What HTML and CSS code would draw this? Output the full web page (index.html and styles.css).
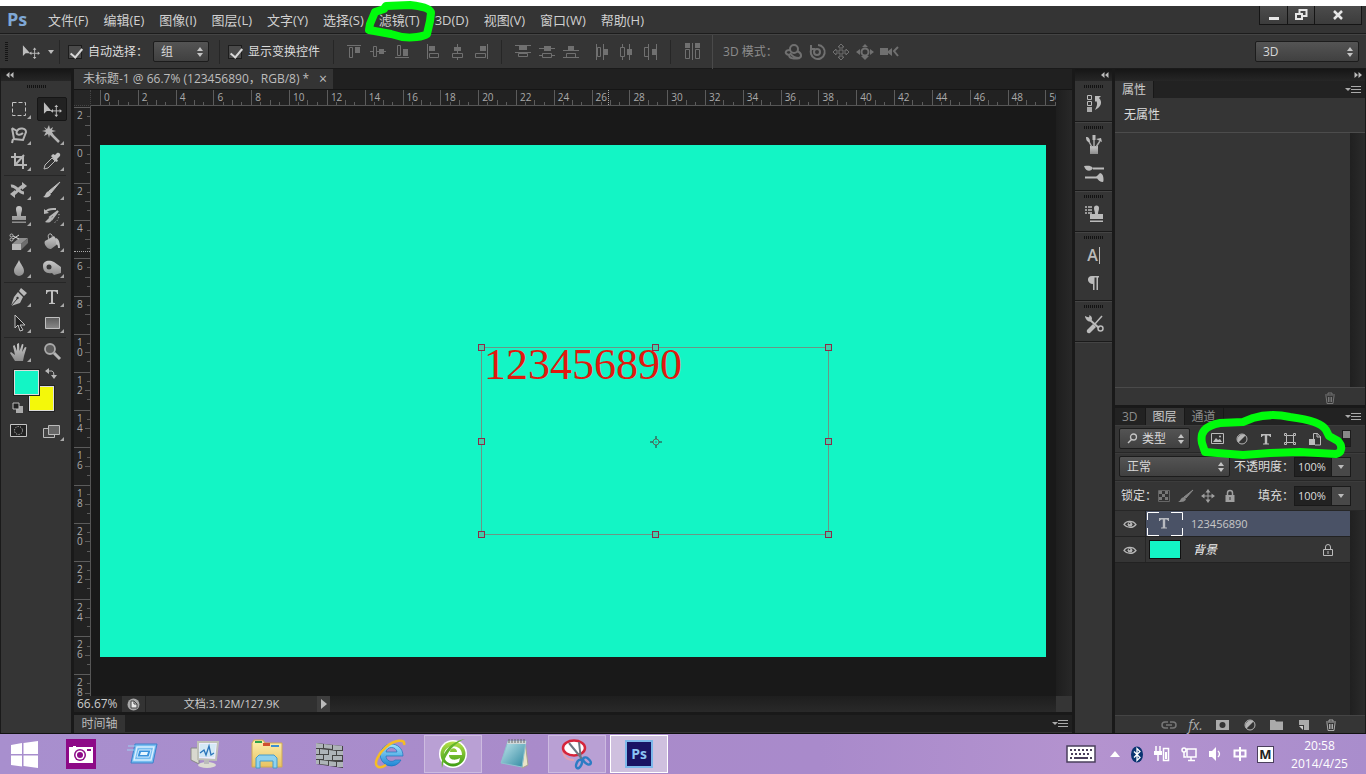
FILE: index.html
```html
<!DOCTYPE html>
<html lang="zh-CN">
<head>
<meta charset="utf-8">
<title>Ps</title>
<link rel="stylesheet" href="styles.css">
</head>
<body>
<svg class="defs" aria-hidden="true">
  <defs>
    <linearGradient id="gm" x1="0" y1="0" x2="0" y2="1"><stop offset="0" stop-color="#c8c8c8"/><stop offset="1" stop-color="#8c8c8c"/></linearGradient>
    <linearGradient id="gd" x1="0" y1="0" x2="0" y2="1"><stop offset="0" stop-color="#5c5c5c"/><stop offset="1" stop-color="#8a8a8a"/></linearGradient>
    <linearGradient id="gb" x1="0" y1="0" x2="0" y2="1"><stop offset="0" stop-color="#9fe3fb"/><stop offset="1" stop-color="#1f86d6"/></linearGradient>
    <linearGradient id="gg" x1="0" y1="0" x2="0" y2="1"><stop offset="0" stop-color="#b4e04a"/><stop offset="1" stop-color="#3d9c14"/></linearGradient>
    <linearGradient id="gt" x1="0" y1="0" x2="1" y2="1"><stop offset="0" stop-color="#c5e9ee"/><stop offset="1" stop-color="#2e87a0"/></linearGradient>
    <linearGradient id="gy" x1="0" y1="0" x2="0" y2="1"><stop offset="0" stop-color="#fdf0b0"/><stop offset="1" stop-color="#e8c260"/></linearGradient>
    <symbol id="updown" viewBox="0 0 8 12"><path d="M4 1l3 4H1zM4 11L1 7h6z" fill="#c4c4c4"/></symbol>
    <symbol id="panelmenu" viewBox="0 0 16 10"><path d="M0 3h6L3 6z" fill="#aaa"/><path d="M6 1.500h10M6 4.500h10M6 7.500h10" stroke="#aaa" fill="none"/></symbol>
    <symbol id="left2" viewBox="0 0 8 6"><path d="M3.500 0v6L0 3zM7.500 0v6L4 3z" fill="#bbb"/></symbol>
    <symbol id="right2" viewBox="0 0 8 6"><path d="M0.500 0v6L4 3zM4.500 0v6L8 3z" fill="#bbb"/></symbol>
    <symbol id="move" viewBox="0 0 20 16"><path d="M1 1v12l3-3h5z" fill="#bdbdbd"/><path d="M14 5v10M9 10h10" stroke="#bdbdbd" fill="none"/><path d="M14 3.500l2 2.500h-4zM14 16.500l2-2.500h-4zM8 10l2.500-2v4zM20 10l-2.500-2v4z" fill="#bdbdbd"/></symbol>
    <symbol id="trash" viewBox="0 0 12 12"><path d="M1 3h10M4 2.500V1h4v1.500M2 4l1 7.500h6L10 4M4.500 5v5M6 5v5M7.500 5v5" stroke="currentColor" fill="none"/></symbol>
    <symbol id="eye" viewBox="0 0 14 10"><path d="M1 5.500C3 1.500 10 1 13 5.500 10 9.500 4 9 1 5.500z" fill="none" stroke="#b5b5b5" stroke-width="1.300"/><circle cx="7" cy="5.300" r="2.400" fill="#b5b5b5"/><circle cx="6.500" cy="4.500" r=".8" fill="#333"/></symbol>
    <symbol id="lock" viewBox="0 0 12 14"><path d="M3.500 6V4a2.500 2.500 0 0 1 5 0v2" fill="none" stroke="currentColor" stroke-width="1.500"/><path d="M1.500 6h9v7h-9z" fill="currentColor"/><path d="M6 8v3" stroke="#333"/></symbol>
    <symbol id="half" viewBox="0 0 12 12"><circle cx="6" cy="6" r="5" fill="#333" stroke="#b5b5b5"/><path d="M2.500 9.500a5 5 0 0 1 7-7z" fill="#b5b5b5"/></symbol>
    <symbol id="cross" viewBox="0 0 14 14"><path d="M7 2v10M2 7h10" stroke="currentColor" fill="none"/><path d="M7 0l2.500 3.500h-5zM7 14l2.500-3.500h-5zM0 7l3.500-2.500v5zM14 7l-3.500-2.500v5z" fill="currentColor"/></symbol>
  </defs>
</svg>
<header class="menubar">
  <span class="logo">Ps</span>
  <nav class="menus">
    <button>文件(F)</button><button>编辑(E)</button><button>图像(I)</button><button>图层(L)</button><button>文字(Y)</button><button>选择(S)</button><button>滤镜(T)</button><button>3D(D)</button><button>视图(V)</button><button>窗口(W)</button><button>帮助(H)</button>
  </nav>
  <div class="winbtns">
    <button aria-label="最小化"><svg width="14" height="12" viewBox="0 0 14 12"><path d="M2 8h10v3H2z" fill="#e6e6e6"/></svg></button>
    <button aria-label="还原"><svg width="14" height="12" viewBox="0 0 14 12"><path d="M5.500 4.500v-3.500h7v6H9" fill="none" stroke="#e6e6e6" stroke-width="2"/><path d="M2 5h6v5H2z" fill="none" stroke="#e6e6e6" stroke-width="2"/></svg></button>
    <button class="close" aria-label="关闭"><svg width="14" height="12" viewBox="0 0 14 12"><path d="M3 2l8 8M11 2L3 10" stroke="#e6e6e6" stroke-width="2.500"/></svg></button>
  </div>
</header>

<section class="options">
  <span class="grip-v"></span>
  <button class="toolpreset" aria-label="移动工具"><svg width="18" height="15"><use href="#move"/></svg><span class="caret"></span></button>
  <i class="sep"></i>
  <label class="check"><input type="checkbox" checked><span>自动选择：</span></label>
  <span class="select w56"><select aria-label="自动选择"><option>组</option></select><svg width="8" height="12"><use href="#updown"/></svg></span>
  <i class="sep"></i>
  <label class="check"><input type="checkbox" checked><span>显示变换控件</span></label>
  <i class="sep"></i>
  <div class="align">
    <button aria-label="顶对齐"><svg width="16" height="16"><path d="M1 1.500h14M3.500 3.500h3v10h-3z" class="s"/><path d="M9 3h5v6H9z" class="f"/></svg></button>
    <button aria-label="垂直居中对齐"><svg width="16" height="16"><path d="M0 7.500h3M7 7.500h9M3.500 2.500h3v10h-3z" class="s"/><path d="M9 5h5v5H9z" class="f"/></svg></button>
    <button aria-label="底对齐"><svg width="16" height="16"><path d="M1 13.500h14M3.500 1.500h3v10h-3z" class="s"/><path d="M9 5h5v7H9z" class="f"/></svg></button>
  </div>
  <div class="align">
    <button aria-label="左对齐"><svg width="16" height="16"><path d="M2.500 0v15M4.500 9.500h9v4h-9z" class="s"/><path d="M4 2h6v5H4z" class="f"/></svg></button>
    <button aria-label="水平居中对齐"><svg width="16" height="16"><path d="M8.500 0v3M8.500 7v2M8.500 13v3M3.500 9.500h10v4h-10z" class="s"/><path d="M5 3h7v4H5z" class="f"/></svg></button>
    <button aria-label="右对齐"><svg width="16" height="16"><path d="M14.500 0v15M2.500 9.500h10v4h-10z" class="s"/><path d="M7 2h6v5H7z" class="f"/></svg></button>
  </div>
  <i class="sep"></i>
  <div class="align">
    <button aria-label="按顶分布"><svg width="16" height="16"><path d="M0 1.500h16M0 8.500h16M3.500 9.500h9v3h-9z" class="s"/><path d="M4 2h8v4H4z" class="f"/></svg></button>
    <button aria-label="垂直居中分布"><svg width="16" height="16"><path d="M0 4.500h16M0 11.500h4M12 11.500h4M3.500 9.500h9v4h-9z" class="s"/><path d="M5 2h7v5H5z" class="f"/></svg></button>
    <button aria-label="按底分布"><svg width="16" height="16"><path d="M0 6.500h16M0 13.500h16M3.500 9.500h9v4h-9z" class="s"/><path d="M5 2h6v4H5z" class="f"/></svg></button>
  </div>
  <div class="align">
    <button aria-label="按左分布"><svg width="16" height="16"><path d="M2.500 0v16M9.500 0v16M3.500 3.500h3v9h-3z" class="s"/><path d="M10 5h4v6h-4z" class="f"/></svg></button>
    <button aria-label="水平居中分布"><svg width="16" height="16"><path d="M4.500 0v3M4.500 13v3M11.500 0v16M2.500 3.500h4v9h-4z" class="s"/><path d="M9 5h5v6H9z" class="f"/></svg></button>
    <button aria-label="按右分布"><svg width="16" height="16"><path d="M6.500 0v16M14.500 0v16M2.500 3.500h4v9h-4z" class="s"/><path d="M10 5h4v6h-4z" class="f"/></svg></button>
  </div>
  <i class="sep"></i>
  <button class="auto" aria-label="自动对齐图层"><svg width="18" height="17"><path d="M8.500 0v17M1.500 6.500h4v9h-4zM11.500 6.500h4v9h-4z" class="s"/><path d="M1 0h5v5H1zM11 0h5v5h-5z" class="f"/></svg></button>
  <i class="sep light"></i>
  <span class="mode">3D 模式：</span>
  <div class="modes">
    <button aria-label="旋转"><svg width="18" height="16"><circle cx="10" cy="5" r="4" class="s w"/><path d="M6 6C1 6 0 10 5 11c0 4 6 4 11 3M13 7c5 2 5 6 2 7-4 0-7-2-9-5" class="s w"/></svg></button>
    <button aria-label="滚动"><svg width="18" height="16"><circle cx="9" cy="8" r="3" class="s w"/><path d="M3 1v4h4M4 4a7 7 0 1 0 6-3" class="s w"/></svg></button>
    <button aria-label="拖动"><svg width="18" height="16"><path d="M9 0l3 3h-2v4h4V5l3 3-3 3V9h-4v4h2l-3 3-3-3h2V9H4v2L1 8l3-3v2h4V3H6z" class="s"/></svg></button>
    <button aria-label="滑动"><svg width="18" height="16"><circle cx="9" cy="8" r="3.500" class="s w"/><path d="M9 0l3 3H6zM9 16l4-4H5zM0 8l4-3v6zM18 8l-4-3v6z" class="f"/></svg></button>
    <button aria-label="缩放"><svg width="18" height="16"><path d="M0 4h8v7H0zM8 7l4-3v8L8 9z" class="f"/><path d="M18 3l-4 4 4 5" class="s w"/></svg></button>
  </div>
  <span class="select work"><select aria-label="工作区"><option>3D</option></select><svg width="8" height="12"><use href="#updown"/></svg></span>
</section>

<main class="workspace">
  <aside class="tools">
    <div class="strip"><svg width="8" height="6"><use href="#left2"/></svg></div>
    <span class="grip"></span>
    <div class="toolgrid">
      <button aria-label="矩形选框" class="more"><svg width="20" height="20"><path d="M3.500 3.500h13v13h-13z" fill="none" stroke="#c4c4c4" stroke-dasharray="4 2"/></svg></button>
      <button aria-label="移动" class="on"><svg width="19" height="16"><use href="#move"/></svg></button>
      <button aria-label="套索" class="more"><svg width="20" height="20"><path d="M3 3l2 11 9 1 3-8c0-4-7-5-9-1-2 4 3 5 6 2M3 3l5 3" class="t"/><path d="M4 14l-1 4" class="t"/></svg></button>
      <button aria-label="魔棒" class="more"><svg width="20" height="20"><path d="M8 8l9 9" stroke="#b5b5b5" stroke-width="2.500"/><path d="M7 0l1 4 3-2-1 3 4 1-4 1 2 4-4-2-1 4-1-4-4 2 2-4-4-1 4-1-2-3 3 2z" fill="#b5b5b5"/></svg></button>
      <button aria-label="裁剪" class="more"><svg width="20" height="20"><path d="M6 2v12h12M2 6h12v12M7 13l8-9" class="t"/></svg></button>
      <button aria-label="吸管" class="more"><svg width="20" height="20"><path d="M11 3l2 1 2-2c2-1 4 1 3 3l-3 3 1 2-2 1-5-6z" fill="#c0c0c0"/><path d="M10 7l3 3-7 7-4 1 1-4z" class="t1"/></svg></button>
      <hr>
      <button aria-label="修补" class="more"><svg width="20" height="20"><path d="M2 6c5-1 8 7 13 7M4 14c4 0 6-8 11-8" class="t b"/><path d="M13 2l5 4-5 4zM6 10l-5 4 5 4z" fill="#b5b5b5"/></svg></button>
      <button aria-label="画笔" class="more"><svg width="20" height="20"><path d="M18 2L9 13l-2-2z" fill="#bdbdbd" stroke="#bdbdbd"/><path d="M7 11l2 3c-1 3-4 4-8 3 3-1 2-5 6-6z" fill="#bdbdbd"/></svg></button>
      <button aria-label="图章" class="more"><svg width="20" height="20"><path d="M7 3a3 3 0 0 1 6 0c0 3-1 3-1 7h5v4H3v-4h5C8 6 7 6 7 3zM3 15.500h14V17H3z" fill="url(#gm)"/></svg></button>
      <button aria-label="历史画笔" class="more"><svg width="20" height="20"><path d="M16 5l-6 8-2-2z" class="t"/><path d="M8 11l2 3c-2 3-4 3-7 2z" fill="#b5b5b5"/><path d="M3 6c4-4 7-3 11-3" class="t"/><path d="M2 3v5l5-1z" fill="#b5b5b5"/><path d="M17 8c0 5-2 8-6 9" class="t1" stroke-dasharray="1 2"/></svg></button>
      <button aria-label="橡皮擦" class="more"><svg width="20" height="20"><path d="M3 12l7-6h9l-7 6z" fill="#8f8f8f"/><path d="M3 12h9v6H3z" fill="#b8b8b8"/><path d="M12 12l7-6v5l-7 7z" fill="#6e6e6e"/><circle cx="2.500" cy="3.500" r="1.500" class="t1"/><circle cx="2.500" cy="7.500" r="1.500" class="t1"/><path d="M4 4l6 3M4 7l6-4" stroke="#ddd"/></svg></button>
      <button aria-label="油漆桶" class="more"><svg width="20" height="20"><path d="M3 9l9-5 5 7-8 6c-3 1-8-5-6-8z" fill="url(#gm)"/><path d="M8 9c-3-4-2-8 1-7 2 1 1 4 1 6" class="t1"/><path d="M14 6c3 1 4 5 4 10h-2c0-3-1-4-2-4z" fill="#bbb"/></svg></button>
      <button aria-label="模糊" class="more"><svg width="20" height="20"><path d="M10 2c2 5 5 7 5 11a5 5 0 0 1-10 0C5 9 8 7 10 2z" fill="url(#gm)"/></svg></button>
      <button aria-label="减淡" class="more"><svg width="20" height="20"><path d="M1 8C1 2 8 2 12 4l7 5v6l-7 2-2-2C4 16 1 13 1 8z" fill="url(#gm)"/><circle cx="7" cy="9" r="2.500" fill="#383838"/></svg></button>
      <hr>
      <button aria-label="钢笔" class="more"><svg width="20" height="20"><path d="M12 1l6 5-3 3-5-5zM9 5l5 5-3 6-9 3 3-9z" fill="#b8b8b8"/><path d="M2 19l6-7" stroke="#333"/><circle cx="8.500" cy="11" r="1.200" fill="#333"/></svg></button>
      <button aria-label="文字" class="more"><svg width="20" height="20"><path d="M4 3h12v4h-1c0-2-1-2.500-4-2.500V15c0 1 1 1 2 1v1H7v-1c1 0 2 0 2-1V4.500C6 4.500 5 5 5 7H4z" fill="#c0c0c0"/></svg></button>
      <button aria-label="路径选择" class="more"><svg width="20" height="20"><path d="M6 2v13l3-3 2 6 3-1-3-5h5z" fill="#222" stroke="#c0c0c0"/></svg></button>
      <button aria-label="矩形" class="more"><svg width="20" height="20"><path d="M3.500 4.500h14v11h-14z" fill="url(#gd)" stroke="#c0c0c0"/></svg></button>
      <hr>
      <button aria-label="抓手" class="more"><svg width="20" height="20"><path d="M6 19l-5-8 1-1 4 3L4 4l1.500-1L8 9 8 2l2-1 .500 8L13 2l1.500.5L13 10l3-5 1.500.5L15 14l-1 5z" fill="url(#gm)"/></svg></button>
      <button aria-label="缩放"><svg width="20" height="20"><circle cx="8" cy="7" r="5" fill="#5c5c5c" stroke="#aaa" stroke-width="1.800"/><path d="M12 11l6 6" stroke="#b5b5b5" stroke-width="3"/></svg></button>
    </div>
    <div class="colors">
      <button class="bg" aria-label="背景色"></button><button class="fg" aria-label="前景色"></button>
      <svg class="swap" width="12" height="12"><path d="M3 3h4q2 0 2 5" class="t1"/><path d="M4 0v6L0 3zM6 7h6l-3 4z" fill="#b8b8b8"/></svg>
      <svg class="reset" width="11" height="11"><path d="M4 4h7v7H4z" fill="#aaa"/><path d="M1 1h6v6H1z" fill="#222" stroke="#bbb"/></svg>
    </div>
    <div class="toolgrid">
      <button aria-label="快速蒙版"><svg width="20" height="20"><path d="M1.500 3.500h16v12h-16z" fill="#222" stroke="#c4c4c4"/><circle cx="9.500" cy="9.500" r="4" fill="none" stroke="#ddd" stroke-dasharray="1 1.500"/></svg></button>
      <button aria-label="屏幕模式" class="more"><svg width="20" height="20"><path d="M1.500 7.500h11v9h-11z" fill="#444" stroke="#bbb"/><path d="M6.500 4.500h11v9h-11z" fill="#666" stroke="#bbb"/></svg></button>
    </div>
  </aside>

  <section class="document">
    <div class="doctabs"><div class="doctab"><span>未标题-1 @ 66.7% (123456890，RGB/8) *</span><button aria-label="关闭文档">×</button></div></div>
    <div class="view">
      <div class="corner"></div>
      <div class="hruler"><div class="htrack"><span>0</span><span>2</span><span>4</span><span>6</span><span>8</span><span>10</span><span>12</span><span>14</span><span>16</span><span>18</span><span>20</span><span>22</span><span>24</span><span class="at">26</span><span>28</span><span>30</span><span>32</span><span>34</span><span>36</span><span>38</span><span>40</span><span>42</span><span>44</span><span>46</span><span>48</span><span>50</span></div></div>
      <div class="vscroll"></div>
      <div class="vruler"><div class="vtrack"><span>2</span><span>0</span><span>2</span><span class="at">4</span><span>6</span><span>8</span><span>10</span><span>12</span><span>14</span><span>16</span><span>18</span><span>20</span><span>22</span><span>24</span><span>26</span><span>28</span></div></div>
      <div class="pasteboard">
        <div class="artboard">
          <div class="box"><span class="digits">123456890</span>
            <i class="h nw"></i><i class="h n"></i><i class="h ne"></i><i class="h w"></i><i class="h e"></i><i class="h sw"></i><i class="h s"></i><i class="h se"></i>
            <svg class="pivot" width="12" height="12"><circle cx="6" cy="6" r="3" fill="none" stroke="#5d6a5b"/><path d="M6 0v3M6 9v3M0 6h3M9 6h3M5.500 6h1" stroke="#333"/></svg>
          </div>
        </div>
      </div>
    </div>
    <div class="status">
      <input class="zoom" aria-label="缩放比例" value="66.67%">
      <span class="statusicon"><svg width="13" height="13"><circle cx="6.500" cy="6.500" r="6" fill="#a8a8a8"/><path d="M4 3h3l3 3v4H4z" fill="#e8e8e8" stroke="#444"/><path d="M7 3v3h3" fill="none" stroke="#444"/></svg></span>
      <span class="docsize">文档:3.12M/127.9K</span>
      <button class="play" aria-label="状态菜单"><svg width="8" height="10"><path d="M1 0v10l6-5z" fill="#bbb"/></svg></button>
      <span class="hscroll"></span><span class="sizer"></span>
    </div>
    <div class="timeline"><button>时间轴</button><svg width="16" height="10"><use href="#panelmenu"/></svg></div>
  </section>

  <aside class="dock">
    <div class="strip end"><svg width="8" height="6"><use href="#left2"/></svg></div>
    <div class="group"><span class="grip"></span>
      <button aria-label="历史记录"><svg width="20" height="20"><path d="M3.500 1.500h4v4h-4zM3.500 7.500h4v4h-4z" fill="none" stroke="#bbb"/><path d="M3 13h5v5H3z" fill="#aaa"/><path d="M11 2h6l-2 2c4 4 2 9-4 12 2-4 3-7 1-9l-1 1z" fill="#bbb"/></svg></button></div>
    <div class="group"><span class="grip"></span>
      <button aria-label="画笔"><svg width="20" height="20"><path d="M6 11h8v8H6z" fill="url(#gm)"/><path d="M8 12L4 5M10 12V3M12 12l4-6" stroke="#aaa" stroke-width="1.500"/><path d="M2 2c3 0 4 2 4 5C3 7 2 5 2 2zM8.500 0h3v5h-3zM12 4l5-1 1 4z" fill="#bbb"/></svg></button>
      <button aria-label="画笔预设"><svg width="20" height="20"><path d="M9 5.500h11M1 14.500h12" stroke="#bbb" stroke-width="2"/><path d="M0 3c4 0 6-1 9 2-2 4-7 4-9-2zM12 14l4-4c4 0 4 9 3 9-3 0-5-2-7-5z" fill="#bbb"/></svg></button></div>
    <div class="group"><span class="grip"></span>
      <button aria-label="仿制源"><svg width="20" height="20"><path d="M10 4a2 2 0 0 1 5 0c0 3-1 3-1 6h5v5H6v-5h5c0-3-1-3-1-6zM6 16.500h13V18H6z" fill="#bbb"/><path d="M1 3h2M4 3h4M1 6h2M4 6h4M1 9h2M4 9h4" stroke="#bbb" stroke-width="1.500"/></svg></button></div>
    <div class="group"><span class="grip"></span>
      <button aria-label="字符" class="char">A<i></i></button>
      <button aria-label="段落"><svg width="20" height="20"><path d="M15 3H8C2 3 3 11 9 11v6h1.500V4.500h2V17H14V4.500h1z" fill="#bbb"/></svg></button></div>
    <div class="group"><span class="grip"></span>
      <button aria-label="工具预设"><svg width="20" height="20"><path d="M18 2l-8 9" stroke="#bbb" stroke-width="1.500"/><path d="M9 10l3 3-6 6c-2 1-4-1-3-3z" fill="#bbb"/><path d="M6 6l9 8" stroke="#bbb" stroke-width="2"/><path d="M1 2c1 0 3 2 4 1s0-2 0-2c3 1 4 4 2 6S1 5 1 2z" fill="#bbb"/><circle cx="16.500" cy="14.500" r="2.500" fill="none" stroke="#bbb" stroke-width="1.500"/></svg></button></div>
  </aside>

  <aside class="panels">
    <div class="strip end"><svg width="8" height="6"><use href="#right2"/></svg></div>
    <div class="tabs"><button class="on">属性</button><svg width="16" height="10"><use href="#panelmenu"/></svg></div>
    <div class="proptitle">无属性</div>
    <div class="propbody"><div></div><i class="track"></i></div>
    <div class="propfoot"><svg width="12" height="12"><use href="#trash"/></svg></div>
    <div class="tabs"><button>3D</button><button class="on">图层</button><button>通道</button><svg width="16" height="10"><use href="#panelmenu"/></svg></div>
    <div class="row">
      <span class="select kind"><svg class="mag" width="11" height="11"><circle cx="6.500" cy="4" r="3" fill="none" stroke="#c4c4c4" stroke-width="1.300"/><path d="M4.500 6.500L1 10" stroke="#c4c4c4" stroke-width="1.500"/></svg><select aria-label="滤镜类型"><option>类型</option></select><svg width="8" height="12"><use href="#updown"/></svg></span>
      <div class="filters">
        <button aria-label="像素图层"><svg width="14" height="14"><path d="M.5 1.500h12v10H.5z" fill="#333" stroke="#bbb"/><path d="M2 10l3-4 2 2 2-1 2 3z" fill="#bbb"/><circle cx="9" cy="4.500" r="1" fill="#bbb"/></svg></button>
        <button aria-label="调整图层"><svg width="12" height="12"><use href="#half"/></svg></button>
        <button aria-label="文字图层"><svg width="12" height="12"><path d="M1 1h10v3h-1c0-1-1-1.500-2.800-1.500V10c0 .5.800.5 1.800.5v1H3v-1c1 0 1.800 0 1.800-.5V2.500C3 2.500 2 3 2 4H1z" fill="#bbb"/></svg></button>
        <button aria-label="形状图层"><svg width="14" height="14"><path d="M3.500 3.500h7v7h-7z" fill="none" stroke="#bbb"/><path d="M1.500 1.500h2v2h-2zM10.500 1.500h2v2h-2zM1.500 10.500h2v2h-2zM10.500 10.500h2v2h-2z" fill="#333" stroke="#bbb"/></svg></button>
        <button aria-label="智能对象"><svg width="13" height="14"><path d="M5.500 7V1.500h4L12.500 5v8H7" fill="none" stroke="#bbb"/><path d="M9 1v4h4" fill="none" stroke="#bbb"/><path d="M1 7h6v6H1z" fill="#bbb"/></svg></button>
      </div>
      <button class="toggle" aria-label="打开或关闭图层过滤"></button>
    </div>
    <div class="row">
      <span class="select blend"><select aria-label="混合模式"><option>正常</option></select><svg width="8" height="12"><use href="#updown"/></svg></span>
      <label class="pct" for="op">不透明度：</label><span class="num"><input id="op" value="100%"><button aria-label="不透明度滑块"><span class="caret"></span></button></span>
    </div>
    <div class="row lockrow">
      <span class="locklabel">锁定：</span>
      <div class="locks">
        <button aria-label="锁定透明像素"><svg width="12" height="12"><path d="M.5.500h11v11H.5z" fill="#333" stroke="#666"/><path d="M1 1h3v3H1zM7 1h3v3H7zM4 4h3v3H4zM1 7h3v3H1zM7 7h3v3H7z" fill="#777"/></svg></button>
        <button aria-label="锁定图像像素"><svg width="16" height="14"><path d="M15 1L8 9 6 8z" fill="#888" stroke="#888"/><path d="M6 8l2 2c-1 3-4 3-8 3 3-1 2-4 6-5z" fill="#888"/></svg></button>
        <button aria-label="锁定位置"><svg width="14" height="14"><use href="#cross"/></svg></button>
        <button aria-label="锁定全部"><svg width="12" height="14"><use href="#lock"/></svg></button>
      </div>
      <label class="pct" for="fi">填充：</label><span class="num"><input id="fi" value="100%"><button aria-label="填充滑块"><span class="caret"></span></button></span>
    </div>
    <div class="layerarea">
      <div class="layers">
        <div class="layer sel"><button class="vis" aria-label="可见"><svg width="14" height="10"><use href="#eye"/></svg></button>
          <svg class="thumb" width="36" height="24"><path d="M.5 8V.5H12M24 .5h11.500V8M35.500 16v7.500H24M12 23.500H.5V16" fill="none" stroke="#fff"/><path d="M12 6h10v3h-1c0-1-1-1.500-2.800-1.500V15c0 .5.800.5 1.800.5v1h-6v-1c1 0 1.800 0 1.800-.5V7.500C14 7.500 13 8 13 9h-1z" fill="#b8bac0"/></svg>
          <span class="latin">123456890</span></div>
        <div class="layer"><button class="vis" aria-label="可见"><svg width="14" height="10"><use href="#eye"/></svg></button>
          <span class="thumb solid"></span><span class="italic">背景</span>
          <svg class="lk" width="12" height="14"><path d="M3.500 6V4a2.500 2.500 0 0 1 5 0v2M1.500 6.500h9v6h-9zM6 8v3" fill="none" stroke="#bbb"/></svg></div>
      </div><i class="track"></i>
    </div>
    <div class="layerfoot">
      <button class="dim" aria-label="链接图层"><svg width="14" height="8"><path d="M6 1H3a3 3 0 0 0 0 6h3M8 1h3a3 3 0 0 1 0 6H8M4 4h6" fill="none" stroke="currentColor" stroke-width="1.500"/></svg></button>
      <button class="fx" aria-label="图层样式">fx.</button>
      <button aria-label="图层蒙版"><svg width="13" height="10"><path d="M0 0h13v10H0z" fill="#aaa"/><circle cx="6.500" cy="5" r="3" fill="#333"/></svg></button>
      <button aria-label="调整图层"><svg width="12" height="12"><use href="#half"/></svg></button>
      <button aria-label="新建组"><svg width="13" height="11"><path d="M0 1h5l1 1.500h7V11H0z" fill="#aaa"/></svg></button>
      <button aria-label="新建图层"><svg width="12" height="12"><path d="M1 1h10v10H6V6H1z" fill="#aaa"/><path d="M1 7h4v4z" fill="#ccc"/></svg></button>
      <button aria-label="删除图层"><svg width="12" height="12"><use href="#trash"/></svg></button>
    </div>
  </aside>
</main>

<footer class="taskbar">
  <button class="start" aria-label="开始"><svg width="28" height="27"><path d="M0 4l11-2v11H0zM12.500 2L27 0v13H12.500zM0 14.500h11v11L0 24zM12.500 14.500H27V27l-14.500-2z" fill="#fff"/></svg></button>
  <div class="apps">
    <button aria-label="相机"><svg width="30" height="30"><path d="M0 0h30v30H0z" fill="#8d0a87"/><path d="M3 8h4V7h3v1h17v16H3z" fill="#fff"/><circle cx="14" cy="16" r="6" fill="#8d0a87"/><circle cx="14" cy="16" r="4.500" fill="#fff"/><circle cx="14" cy="16" r="3" fill="#8d0a87"/><path d="M21 10h4v2h-4z" fill="#8d0a87"/></svg></button>
    <button aria-label="运行"><svg width="32" height="30"><path d="M8 5h22l-4 19H4z" fill="#78bdf0" stroke="#3c82cc"/><path d="M10 8h17l-3 13H7z" fill="none" stroke="#d8efff" stroke-width="1.500"/><path d="M12 11h12l-2 7H10z" fill="#3a92dc" stroke="#cfeaff"/><path d="M14 13h7l-1 3h-7z" fill="#e8f7ff"/><path d="M1 7h7M0 11h7" stroke="#9fd0f4"/></svg></button>
    <button aria-label="性能监视器"><svg width="32" height="30"><path d="M2 9h8v16l-8-4z" fill="#d8d8cf" stroke="#888"/><path d="M9 3h20l-2 18-18-1z" fill="#eef" stroke="#bfc1b8" stroke-width="2"/><path d="M11 5h16l-2 13H10z" fill="#d4e9f5"/><path d="M11 14l4-3 2 5 3-9 2 9 3-2" fill="none" stroke="#2a75bb" stroke-width="1.300"/><ellipse cx="18" cy="26" rx="9" ry="3" fill="#dcdcd2"/><path d="M15 21h5v4h-5z" fill="#bbb"/></svg></button>
    <button aria-label="资源管理器"><svg width="32" height="30"><path d="M1 4l2-3h9l2 3h17v24H1z" fill="url(#gy)" stroke="#cfa954"/><path d="M4 2h7v2H4z" fill="#2fa34a"/><path d="M12 4h7v3h-7z" fill="#d05030"/><path d="M20 6h8v2h-8z" fill="#3f8fd0"/><path d="M5 29V19l3-3h15l3 3v10h-4v-7H9v7z" fill="#8fd2ee" stroke="#459ccb"/></svg></button>
    <button aria-label="防火墙"><svg width="30" height="28"><path d="M2 3l27 3v22L2 24z" fill="#444"/><path d="M2 3l7 1v4H2zM10 4l8 1v4l-8-1zM19 5l9 1v4h-9zM2 9h3v5H2zM6 9l8 1v4H6zM15 10l7 1v4h-7zM23 11h6v4h-6zM2 15h7v4H2zM10 15h8v5h-8zM19 16h9v4h-9zM2 20h3v4H2zM6 20l8 1v4l-8-1zM15 21l7 1v4h-7zM23 22h6v5h-6z" fill="#aeb4b8"/></svg></button>
    <button aria-label="浏览器"><svg width="32" height="32"><path d="M16 6a11 11 0 1 0 10 16h-6c-3 3-9 1-9-4h17C28 10 22 6 16 6zm-5 8c1-6 10-6 11 0z" fill="url(#gb)" stroke="#1b76bd" stroke-width=".7"/><path d="M29 7c2-7-10-5-18 2C3 16-1 25 2 28c2 2 6 1 9-1" fill="none" stroke="#f5bd25" stroke-width="2.500"/></svg></button>
    <button class="open" aria-label="安全浏览器"><svg width="32" height="32"><circle cx="16" cy="16" r="14" fill="#fff"/><circle cx="16" cy="16" r="12.500" fill="url(#gg)"/><path d="M25 17H12c0 5 6 6 11 3l-1 4c-8 4-15 0-15-7C7 6 25 5 25 17zm-12-3h7c0-5-7-5-7 0z" fill="#fff"/><path d="M28 1C17 5 8 16 5 30 3 17 12 4 28 1z" fill="#63b52b"/></svg></button>
    <button aria-label="记事本"><svg width="32" height="30"><path d="M26 2l3 24-6 3z" fill="#e9e4c8" stroke="#a8a48c"/><path d="M9 2h18l-4 26-21-4z" fill="url(#gt)" stroke="#8ec3cf"/><path d="M9 2h18v3H8z" fill="#d0d8da"/><path d="M10 0v4M13 0v4M16 0v4M19 0v4M22 0v4M25 0v4" stroke="#666"/></svg></button>
    <button class="open" aria-label="截图工具"><svg width="32" height="32"><path d="M2 11c0 8 5 11 11 11" fill="none" stroke="#e5a0b0" stroke-width="2"/><ellipse cx="13" cy="10" rx="11" ry="7.500" fill="#fff" stroke="#d6253b" stroke-width="2.500"/><path d="M8 5l14 17M18 4l2 18" stroke="#6d7780" stroke-width="2"/><ellipse cx="18" cy="26" rx="2.500" ry="4.500" transform="rotate(25 18 26)" fill="none" stroke="#2c7cc4" stroke-width="2.500"/><ellipse cx="26" cy="23" rx="2.500" ry="4.500" transform="rotate(-50 26 23)" fill="none" stroke="#2c7cc4" stroke-width="2.500"/></svg></button>
    <button class="open active" aria-label="Photoshop"><span class="psicon">Ps</span></button>
  </div>
  <div class="tray">
    <svg width="30" height="18"><path d="M1 1h28v16H1z" fill="#fff" stroke="#4a3f5c" stroke-width="1.500"/><path d="M4 5h22M5 9h20" stroke="#4a3f5c" stroke-width="2" stroke-dasharray="2 2"/><path d="M4 13h2M8 13h14M24 13h2" stroke="#4a3f5c" stroke-width="2"/></svg>
    <svg width="10" height="6"><path d="M5 0l5 6H0z" fill="#fff"/></svg>
    <svg width="12" height="17"><ellipse cx="6" cy="8.500" rx="6" ry="8" fill="#0a3370"/><path d="M3 5.500l6 6-3 3v-12l3 3-6 6" fill="none" stroke="#fff" stroke-width="1.300"/></svg>
    <svg width="16" height="16"><path d="M2 0v5M6 0v5M4 9v6" stroke="#fff" stroke-width="1.500"/><path d="M0 5h8v4H0z" fill="#fff"/><path d="M9.500 2.500h5v12h-5z" fill="none" stroke="#fff" stroke-width="1.500"/><path d="M11 6h2v7h-2z" fill="#fff"/></svg>
    <svg width="16" height="16"><circle cx="3" cy="4" r="2" fill="none" stroke="#fff" stroke-width="1.500"/><path d="M3 6v5h2M6 3h9v8H6zM10 11v3M7 14.500h7" fill="none" stroke="#fff" stroke-width="1.500"/></svg>
    <svg width="14" height="16"><path d="M1 5h3l4-4v14l-4-4H1z" fill="#fff"/><path d="M10 5q3 3 0 6" fill="none" stroke="#fff" stroke-width="1.300"/></svg>
    <svg width="14" height="16"><path d="M1.500 4.500h11v6h-11zM7 1v14" fill="none" stroke="#fff" stroke-width="2"/></svg>
    <span class="ime">M</span>
  </div>
  <div class="clock"><time>20:58</time><time>2014/4/25</time></div>
</footer>

<svg class="mark menu-mark" width="76" height="48" viewBox="362 -2 76 48" aria-hidden="true"><path d="M375 12L384 9 386 6 410 5C420 6 431 8 431 13L430 21 427 34C423 37 412 38 402 37L391 34 369 30 370 24 375 12z"/></svg>
<svg class="mark filter-mark" width="158" height="54" viewBox="1192 408 158 54" aria-hidden="true"><path d="M1202 443C1200 433 1204 426 1220 423L1243 422 1253 418C1263 415 1276 414 1290 417 1306 419 1322 423 1326 430L1329 436 1338 441C1343 446 1342 453 1336 454L1300 452 1270 453 1243 455 1205 452 1202 443z"/></svg>
</body>
</html>
```
FILE: styles.css
```css
* { box-sizing: border-box; }
body {
  margin: 0;
  position: relative;
  height: 100vh;
  display: flex;
  flex-direction: column;
  padding-top: 6px;
  background: #fff;
  color: #c8c8c8;
  font: 12px/16px "Open Sans", "Noto Sans CJK SC", sans-serif;
  overflow: hidden;
}
button, input, select { font: inherit; color: inherit; border: 0; background: none; padding: 0; margin: 0; border-radius: 0; }
button { display: flex; align-items: center; justify-content: center; white-space: nowrap; }
svg { display: block; flex: none; overflow: visible; }
.defs { position: absolute; width: 0; height: 0; }
.caret { border: 3px solid transparent; border-top: 4px solid #bbb; border-bottom: 0; }

/* Menu bar */
.menubar { display: flex; flex: none; height: 28px; background: #343434; padding: 0 4px 0 7px; border-bottom: 1px solid #1c1c1c; }
.logo { width: 32px; font: bold 18px/26px "Open Sans", sans-serif; color: #7fa8d6; }
.menus { display: flex; gap: 15px; padding-left: 9px; font-size: 13px; color: #d0d0d0; }
.winbtns { display: flex; margin-left: auto; height: 19px; border: 1px solid #151515; border-top: 0; background: linear-gradient(#4c4c4c, #3c3c3c); }
.winbtns button { width: 27px; }
.winbtns button + button { border-left: 1px solid #151515; }
.winbtns .close { width: 47px; }

/* Options bar */
.options { display: flex; flex: none; align-items: center; height: 35px; background: #353535; border-top: 1px solid #444; border-bottom: 1px solid #1a1a1a; padding: 0 7px 0 5px; white-space: nowrap; }
.grip-v { width: 3px; height: 20px; background: repeating-linear-gradient(#151515 0 1px, transparent 1px 2px); }
.toolpreset { gap: 8px; margin-left: 14px; margin-right: 5px; }
.sep { width: 1px; height: 24px; background: #262626; flex: none; }
.sep.light { height: 34px; background: #4a4a4a; margin-right: 10px; }
.check { display: flex; align-items: center; gap: 6px; margin: 0 5px 0 8px; color: #dcdcdc; }
.check input { appearance: none; width: 14px; height: 14px; border: 1px solid #1c1c1c; background: #4a4a4a; display: grid; place-items: center; }
.check input:checked::before { content: ""; width: 5px; height: 10px; margin: 0 0 6px 2px; border: solid #d8d8d8; border-width: 0 2px 2px 0; transform: rotate(40deg); }
.select { display: flex; align-items: center; height: 21px; padding: 0 4px 0 7px; border: 1px solid #1c1c1c; border-radius: 2px; background: linear-gradient(#545454, #404040); color: #d8d8d8; }
.select select { appearance: none; flex: 1; min-width: 0; outline: 0; }
.select.w56 { width: 56px; margin-right: 10px; }
.check + .sep { margin-right: 12px; margin-left: 8px; }
.align { display: flex; gap: 8px; margin-right: 15px; }
.align + .sep { margin: 0 13px 0 -3px; }
.s { fill: none; stroke: #707070; }
.f { fill: #707070; }
.w { stroke-width: 2; }
.auto { margin: 0 10px 0 0; }
.mode { color: #8c8c8c; }
.modes { display: flex; gap: 6px; margin-left: 6px; }
.work { width: 104px; margin-left: auto; }

/* Workspace */
.workspace { flex: 1; min-height: 0; display: flex; gap: 3px; padding-right: 1px; background: #191919; border-bottom: 1px solid #111; }
.strip { height: 12px; flex: none; display: flex; align-items: center; padding: 0 5px; background: linear-gradient(#161616, #262626); }
.strip.end { justify-content: flex-end; padding-right: 3px; }
.grip { display: block; width: 19px; height: 3px; margin: 4px auto 2px; background: repeating-linear-gradient(90deg, #121212 0 1px, transparent 1px 2px); }

.tools { width: 71px; background: #353535; border-left: 1px solid #1a1a1a; }
.tools .grip { margin: 4px auto 8px; }
.toolgrid { display: grid; grid-template-columns: 33px 33px; padding-left: 1px; }
.toolgrid button { height: 26px; position: relative; }
.toolgrid .on { height: 24px; margin: 1px 1px 1px 2px; background: #222; border: 1px solid #161616; border-radius: 2px; }
.more::after { content: ""; position: absolute; right: 4px; bottom: 3px; border-left: 4px solid transparent; border-bottom: 4px solid #a8a8a8; }
.toolgrid hr { grid-column: span 2; width: 62px; height: 3px; margin: 0 2px; border: solid #353535; border-width: 1px 0; background: #262626; }
.t { fill: none; stroke: #b5b5b5; stroke-width: 2; }
.t.b { stroke-width: 3; }
.t1 { fill: none; stroke: #b8b8b8; stroke-width: 1; }
.colors { position: relative; height: 53px; }
.colors > * { position: absolute; }
.fg, .bg { width: 25px; height: 25px; border: 1px solid #ddd; outline: 1px solid #222; }
.fg { left: 13px; top: 5px; background: #13f5c5; }
.bg { left: 28px; top: 21px; background: #f4f80a; }
.swap { left: 44px; top: 3px; }
.reset { left: 11px; top: 37px; }

/* Document */
.document { flex: 1; min-width: 0; display: flex; flex-direction: column; }
.doctabs { height: 21px; flex: none; background: #202020; border-bottom: 1px solid #151515; display: flex; }
.doctab { display: flex; align-items: center; gap: 6px; width: 259px; padding: 0 6px 0 9px; background: #343434; color: #bdbdbd; font-size: 12px; white-space: nowrap; }
.doctab button { font-size: 14px; margin-left: auto; line-height: 14px; }
.view { flex: 1; min-height: 0; display: grid; grid-template: 16px minmax(0, 1fr) / 17px minmax(0, 1fr) 16px; background: #191919; }
.corner { background: #262626; border: dotted #444; border-width: 0 1px 1px 0; }
.hruler { overflow: hidden; background: #222; border-bottom: 1px solid #555; padding-left: 9px; }
.htrack { display: flex; width: 983px; height: 100%; font-size: 10px; line-height: 14px; color: #aaa; }
.htrack span { flex: 1; padding-left: 4px; background: linear-gradient(#5c5c5c, #5c5c5c) 0 0 / 1px 100% no-repeat, linear-gradient(#5c5c5c, #5c5c5c) 25% 100% / 1px 3px no-repeat, linear-gradient(#5c5c5c, #5c5c5c) 50% 100% / 1px 5px no-repeat, linear-gradient(#5c5c5c, #5c5c5c) 75% 100% / 1px 3px no-repeat; }
.at { position: relative; }
.htrack .at::after { content: ""; position: absolute; left: 16px; top: 0; height: 15px; border-left: 1px dotted #aaa; }
.vtrack .at::after { content: ""; position: absolute; left: 0; top: 31px; width: 16px; border-top: 1px dotted #aaa; }
.vscroll { grid-column: 3; grid-row: 1 / 3; background: linear-gradient(90deg, #1e1e1e, #282828); }
.vruler { overflow: hidden; background: #222; border-right: 1px solid #555; padding-top: 1px; }
.vtrack { display: flex; flex-direction: column; height: 605px; font-size: 10px; line-height: 10px; color: #aaa; }
.vtrack span { flex: 1; padding: 3px 7px 0 3px; word-break: break-all; background: linear-gradient(#5c5c5c, #5c5c5c) 0 0 / 100% 1px no-repeat, linear-gradient(#5c5c5c, #5c5c5c) 100% 25% / 3px 1px no-repeat, linear-gradient(#5c5c5c, #5c5c5c) 100% 50% / 5px 1px no-repeat, linear-gradient(#5c5c5c, #5c5c5c) 100% 75% / 3px 1px no-repeat; }
.pasteboard { display: flex; padding: 39px 10px 39px 9px; }
.artboard { position: relative; flex: 1; background: #13f5c5; }
.box { position: absolute; left: 381px; top: 202px; width: 348px; height: 188px; border: 1px solid #6b9685; }
.digits { display: block; padding-left: 2px; font: 44px/34px "Liberation Serif", serif; color: #e0190f; }
.h { position: absolute; width: 7px; height: 7px; border: 1px solid #8c2b4a; background: #3fcfa9; }
.nw, .w, .sw { left: -4px; }
.n, .s.h { left: 170px; }
.ne, .e, .se { right: -4px; }
.nw, .n, .ne { top: -4px; }
.w.h, .e { top: 90px; }
.sw, .s.h, .se { bottom: -4px; }
.pivot { position: absolute; left: 168px; top: 88px; }
.status { display: flex; height: 16px; flex: none; background: #2c2c2c; color: #ccc; font-size: 11px; }
.zoom { width: 48px; padding-left: 3px; background: #222; font-size: 12px; }
.statusicon { width: 24px; display: grid; place-items: center; background: #333; border-right: 1px solid #222; }
.docsize { width: 171px; text-align: center; background: #303030; }
.play { width: 13px; background: #3d3d3d; }
.hscroll { flex: 1; background: linear-gradient(#1e1e1e, #292929); }
.sizer { width: 16px; background: #353535; }
.timeline { display: flex; align-items: center; height: 21px; flex: none; border-top: 3px solid #191919; background: #202020; padding-right: 4px; border-bottom: 1px solid #333; }
.timeline button { width: 51px; height: 17px; background: #333; color: #bbb; }
.timeline svg { margin-left: auto; }

/* Icon dock */
.dock { width: 37px; background: #353535; }
.group { padding-bottom: 3px; border-bottom: 1px solid #1a1a1a; box-shadow: 0 1px #444; }
.group button { width: 100%; height: 28px; }
.group .char { font: 600 16px/20px "Open Sans", sans-serif; color: #bbb; gap: 1px; }
.char i { width: 1px; height: 17px; background: #bbb; }

/* Panels */
.panels { width: 250px; display: flex; flex-direction: column; background: #353535; }
.tabs { display: flex; align-items: center; height: 17px; flex: none; background: #222; padding-right: 4px; }
.tabs button { height: 17px; padding: 0 7px; color: #8c8c8c; border-right: 1px solid #181818; }
.tabs .on { background: #353535; color: #ccc; }
.tabs svg { margin-left: auto; }
.proptitle { flex: none; height: 35px; padding: 9px; color: #dcdcdc; border-bottom: 1px solid #4c4c4c; }
.propbody { height: 254px; flex: none; display: flex; }
.propbody div { flex: 1; }
.track { width: 15px; background: linear-gradient(90deg, #202020, #2b2b2b); }
.propfoot { height: 21px; flex: none; padding: 4px 29px; display: flex; justify-content: flex-end; border-top: 1px solid #4a4a4a; border-bottom: 3px solid #191919; color: #777; }
.row { display: flex; align-items: center; height: 28px; flex: none; padding: 0 14px 0 4px; border-bottom: 1px solid #272727; box-shadow: inset 0 1px #3c3c3c; white-space: nowrap; }
.lockrow { height: 30px; }
.kind { width: 71px; }
.mag { margin-right: 4px; }
.filters { display: flex; flex: 1; padding-left: 16px; }
.filters button { width: 24px; height: 20px; }
.toggle { width: 9px; height: 17px; border: 1px solid #1c1c1c; background: linear-gradient(#888 0 45%, #222 45%); }
.blend { width: 111px; }
.pct { margin-left: auto; color: #dcdcdc; }
.num { display: flex; width: 57px; height: 20px; border: 1px solid #1a1a1a; background: #222; }
.num input { width: 36px; padding-left: 3px; font-size: 11px; color: #ddd; }
.num button { flex: 1; background: #484848; border-left: 1px solid #1a1a1a; }
.locklabel { width: 34px; padding-left: 2px; color: #dcdcdc; }
.locks { display: flex; color: #a0a0a0; }
.locks button { width: 22px; height: 20px; }
.layerarea { flex: 1; min-height: 0; display: flex; background: #292929; }
.layers { flex: 1; }
.layer { display: flex; align-items: center; height: 26px; background: #353535; border-bottom: 1px solid #222; }
.layer.sel { background: #4a5266; }
.vis { width: 31px; height: 25px; background: #353535; border-right: 1px solid #262626; }
.thumb { margin: 0 8px 0 1px; }
.solid { width: 32px; height: 19px; margin: 0 12px 0 3px; border: 1px solid #111; background: #13f5c5; }
.latin { font-size: 11px; color: #c8c8c8; }
.italic { font-style: italic; color: #eee; }
.lk { margin-left: auto; margin-right: 16px; }
.layerfoot { display: flex; align-items: center; justify-content: flex-end; height: 18px; flex: none; padding-right: 21px; border-top: 1px solid #444; color: #aaa; }
.layerfoot button { width: 27px; height: 16px; }
.layerfoot .dim { color: #777; }
.layerfoot .fx { font: italic 14px/16px "Open Sans", sans-serif; }

/* Taskbar */
.taskbar { display: flex; flex: none; height: 40px; background: linear-gradient(90deg, #a88fce, #a98bca 40%, #a98acb 60%, #b493cf 80%, #a98dcc); color: #fff; }
.start { width: 50px; }
.apps { display: flex; }
.apps button { width: 58px; height: 38px; margin: 1px 2px; }
.apps .open { background: #b9a0d4; border: 1px solid #cdbbe0; }
.apps .active { background: #cfc0df; border: 1px solid #fff; }
.psicon { width: 28px; height: 28px; border: 2px solid #7db8ea; background: #1a1464; color: #8cc4f4; font: bold 14px/24px "Open Sans", sans-serif; }
.tray { display: flex; align-items: center; gap: 11px; margin-left: auto; }
.tray svg:first-child { margin-right: 3px; }
.ime { width: 15px; height: 15px; background: #fff; outline: 1px solid #4a3f5c; color: #222; font: bold 13px/15px "Open Sans", sans-serif; text-align: center; }
.clock { display: flex; flex-direction: column; align-items: center; width: 93px; padding-top: 3px; line-height: 18px; }

/* Marker strokes */
.mark { position: absolute; pointer-events: none; fill: none; stroke: #00fb0c; stroke-width: 8; stroke-linejoin: round; }
.menu-mark { left: 362px; top: -2px; }
.filter-mark { left: 1192px; top: 408px; }
```
